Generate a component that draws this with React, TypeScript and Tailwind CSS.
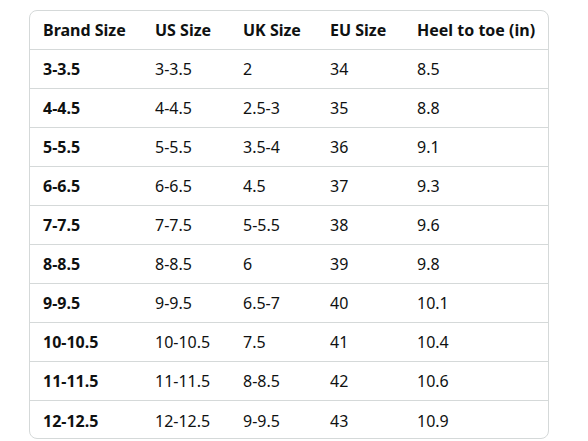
import React from "react";

const rows = [
  ["3-3.5", "3-3.5", "2", "34", "8.5"],
  ["4-4.5", "4-4.5", "2.5-3", "35", "8.8"],
  ["5-5.5", "5-5.5", "3.5-4", "36", "9.1"],
  ["6-6.5", "6-6.5", "4.5", "37", "9.3"],
  ["7-7.5", "7-7.5", "5-5.5", "38", "9.6"],
  ["8-8.5", "8-8.5", "6", "39", "9.8"],
  ["9-9.5", "9-9.5", "6.5-7", "40", "10.1"],
  ["10-10.5", "10-10.5", "7.5", "41", "10.4"],
  ["11-11.5", "11-11.5", "8-8.5", "42", "10.6"],
  ["12-12.5", "12-12.5", "9-9.5", "43", "10.9"],
];

const headers = ["Brand Size", "US Size", "UK Size", "EU Size", "Heel to toe (in)"];

export default function App() {
  return (
    <div className="w-[588px] h-[441px] bg-white pt-[10px] pl-[29px]" style={{ fontFamily: '"Noto Sans", sans-serif' }}>
      <div className="w-[520px] h-[429px] border border-[#d5d9d9] rounded-lg overflow-hidden text-[16px] text-[#0f1111]">
        <div className="grid grid-cols-[112px_88px_87px_87px_1fr] h-[39px] items-center border-b border-[#d5d9d9] font-bold">
          {headers.map((h) => (
            <div key={h} className="pl-[13px]">{h}</div>
          ))}
        </div>
        {rows.map((r, i) => (
          <div
            key={i}
            className={`grid grid-cols-[112px_88px_87px_87px_1fr] h-[39px] items-center ${i < rows.length - 1 ? "border-b border-[#d5d9d9]" : ""}`}
          >
            {r.map((c, j) => (
              <div key={j} className={`pl-[13px] ${j === 0 ? "font-bold" : ""}`}>{c}</div>
            ))}
          </div>
        ))}
      </div>
    </div>
  );
}
